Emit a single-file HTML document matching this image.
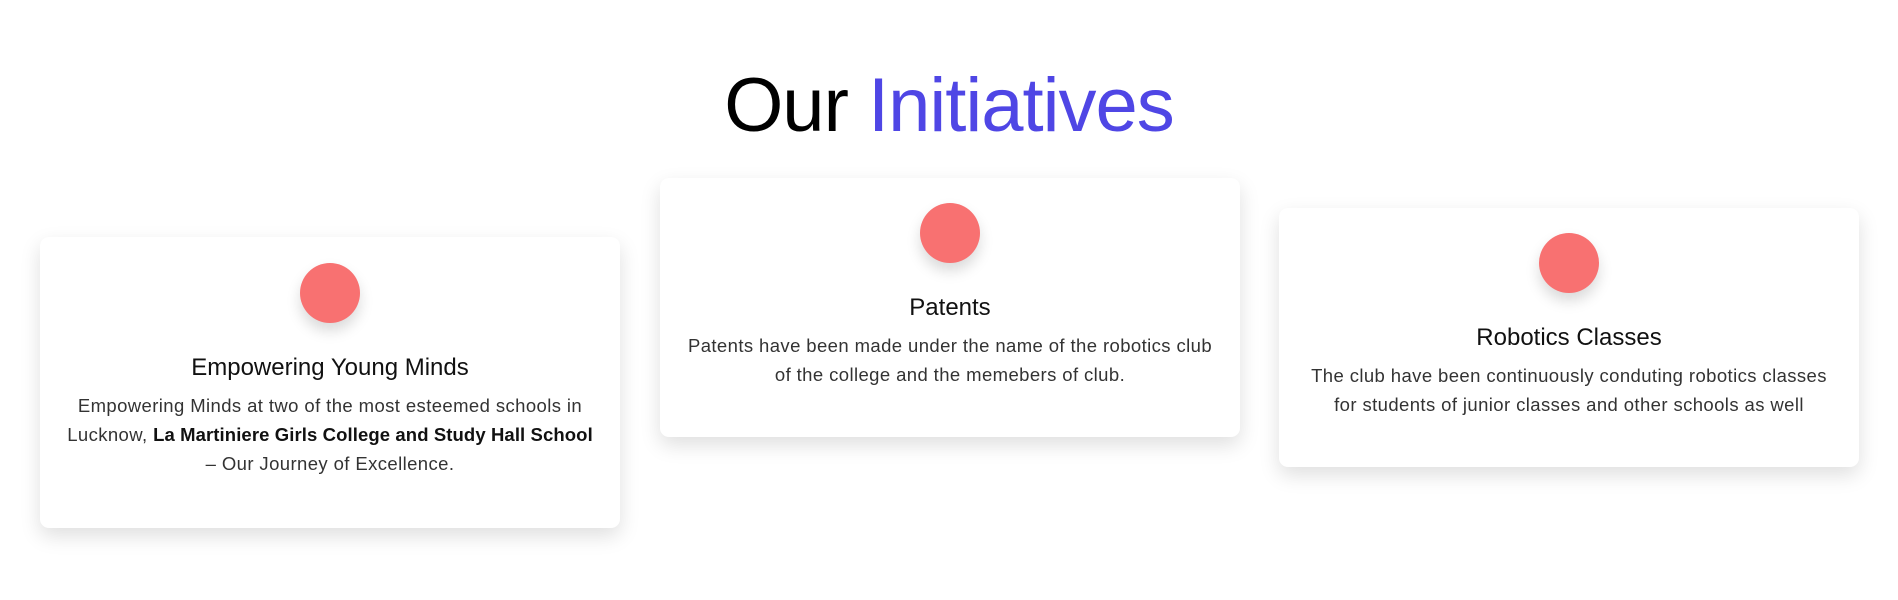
<!DOCTYPE html>
<html><head><meta charset="utf-8"><style>
html,body{margin:0;padding:0;background:#fff;width:1898px;height:600px;overflow:hidden;font-family:"Liberation Sans",sans-serif;}
h1{position:absolute;left:0;width:1898px;top:58px;margin:0;text-align:center;font-size:76px;font-weight:500;color:#000;letter-spacing:-1px;line-height:96px;}
h1 span{color:#4f46e5;}
.card{position:absolute;width:580px;background:#fff;border-radius:9px;box-shadow:0 8px 20px rgba(0,0,0,0.13);box-sizing:border-box;padding:26px 18px 0;text-align:center;}
.dot{width:60px;height:60px;border-radius:50%;background:#f87171;margin:0 auto;box-shadow:0 8px 14px rgba(0,0,0,0.15);}
.card h3{margin:30px 0 8px;font-size:24px;font-weight:400;color:#111;line-height:30px;}
.card p{margin:0;font-size:18.5px;letter-spacing:0.4px;line-height:29px;color:#333;}
.card p b{font-weight:600;color:#111;letter-spacing:0.1px;}
</style></head><body>
<h1>Our <span>Initiatives</span></h1>
<div class="card" style="left:40px;top:237px;height:291px;padding-top:26px">
<div class="dot"></div>
<h3>Empowering Young Minds</h3>
<p>Empowering Minds at two of the most esteemed schools in Lucknow, <b>La Martiniere Girls College and Study Hall School</b><br>– Our Journey of Excellence.</p>
</div>
<div class="card" style="left:660px;top:178px;height:259px;padding-top:25px">
<div class="dot"></div>
<h3>Patents</h3>
<p>Patents have been made under the name of the robotics club<br>of the college and the memebers of club.</p>
</div>
<div class="card" style="left:1279px;top:208px;height:259px;padding-top:25px">
<div class="dot"></div>
<h3>Robotics Classes</h3>
<p>The club have been continuously conduting robotics classes<br>for students of junior classes and other schools as well</p>
</div>
</body></html>
